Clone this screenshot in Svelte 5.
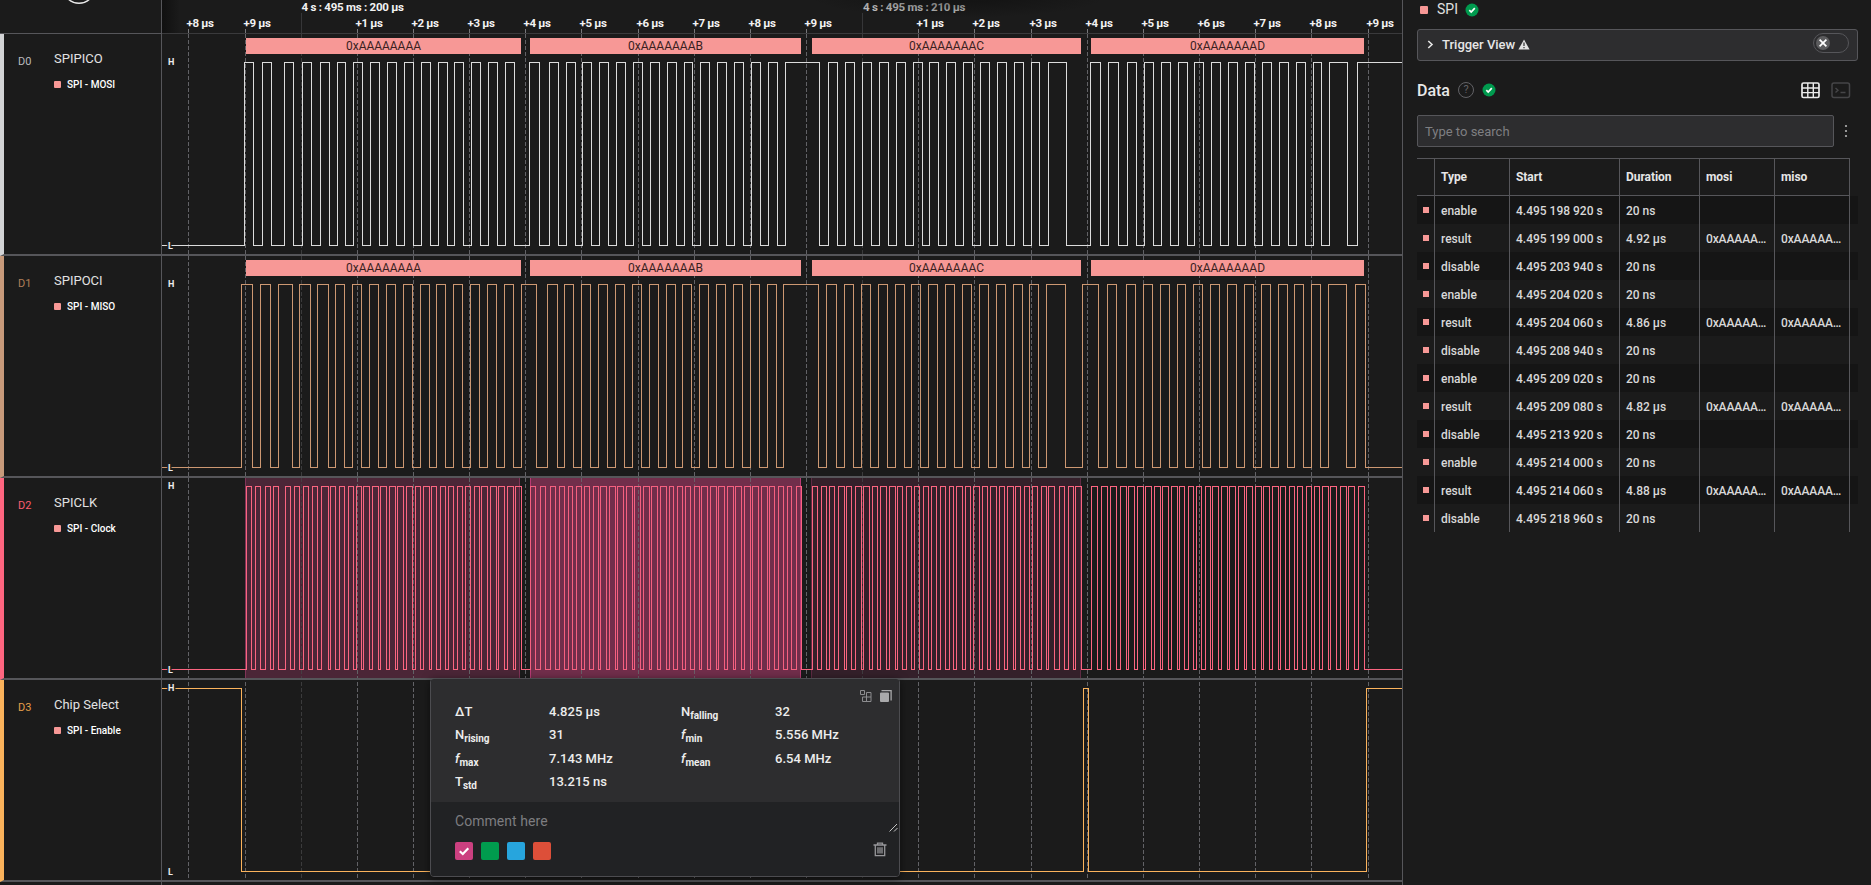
<script>
  const channels = [
    { id: 'D0', name: 'SPIPICO', role: 'SPI - MOSI', color: '#d2d3d5', idColor: '#b9babc', height: 220 },
    { id: 'D1', name: 'SPIPOCI', role: 'SPI - MISO', color: '#c79a7b', idColor: '#b07f58', height: 220 },
    { id: 'D2', name: 'SPICLK', role: 'SPI - Clock', color: '#ff6680', idColor: '#fb5d6e', height: 200 },
    { id: 'D3', name: 'Chip Select', role: 'SPI - Enable', color: '#fbb35c', idColor: '#e59f4a', height: 200 }
  ];

  // Edge positions; the level toggles at every entry.
  const mosi = [244,253,262,271,284,293,302,311,320,329,337,345,353,362,370,379,387,396,404,413,421,430,438,447,454,463,471,480,488,497,505,514,529,539,549,558,566,575,582,591,599,608,616,625,633,642,650,659,667,676,684,692,700,709,717,726,734,743,751,760,768,777,785,819,828,837,845,854,862,871,879,888,896,905,913,922,929,938,946,955,963,972,980,989,997,1006,1014,1023,1031,1039,1048,1066,1090,1100,1108,1118,1127,1136,1144,1153,1161,1170,1178,1187,1194,1203,1211,1220,1228,1237,1245,1254,1262,1271,1279,1288,1296,1305,1313,1321,1329,1347,1357];
  const miso = [241,252,260,270,278,292,299,310,317,328,335,344,352,361,369,378,386,395,403,412,420,429,436,445,453,462,470,479,487,496,504,513,521,536,547,557,564,573,581,590,598,607,615,624,632,641,649,658,666,675,682,691,699,708,716,725,733,742,750,759,767,776,783,818,826,836,844,853,861,870,878,887,895,904,911,920,928,937,945,954,962,971,979,988,996,1005,1013,1022,1029,1038,1046,1065,1082,1098,1107,1116,1126,1135,1143,1152,1160,1169,1177,1185,1193,1202,1210,1219,1227,1236,1244,1253,1261,1270,1278,1287,1294,1303,1311,1320,1328,1346,1355,1365];
  const clk = [246,251,255,260,265,270,273,278,285,290,294,299,303,308,312,317,321,328,330,335,339,344,348,353,356,361,363,369,372,378,380,386,389,395,397,403,406,412,415,420,423,429,431,436,440,445,448,453,457,462,465,470,474,479,481,487,490,496,498,504,507,513,515,521,
    530,535,540,545,550,555,559,564,568,572,576,581,584,589,593,598,600,606,609,615,617,623,626,632,634,640,643,649,651,657,660,666,669,673,677,682,685,690,694,699,701,707,710,716,718,724,727,733,735,741,744,750,752,758,761,767,769,774,778,783,787,791,796,801,
    812,817,821,826,829,834,838,844,846,851,855,861,863,869,872,877,880,886,889,895,897,902,906,911,914,919,923,928,931,936,940,945,949,953,956,962,965,970,973,979,982,987,990,996,999,1004,1007,1013,1015,1020,1024,1029,1032,1037,1041,1046,1048,1054,1059,1064,1068,1073,1075,1081,
    1091,1097,1101,1107,1110,1116,1120,1126,1128,1134,1137,1143,1145,1151,1154,1160,1162,1168,1171,1177,1179,1184,1188,1193,1196,1201,1205,1210,1212,1218,1221,1227,1229,1235,1238,1244,1246,1252,1255,1261,1263,1269,1272,1278,1280,1285,1289,1294,1297,1302,1306,1311,1314,1319,1322,1328,1330,1336,1340,1346,1348,1354,1358,1364];
  const cs = [241,1083,1088,1366];

  function wave(edges, hi, lo, high = false) {
    let d = `M162 ${(high ? hi : lo) + 0.5}`;
    for (const x of edges) {
      d += `H${x + 0.5}`;
      high = !high;
      d += `V${(high ? hi : lo) + 0.5}`;
    }
    return d + 'H1402';
  }

  const traces = [
    { d: wave(mosi, 62, 245), color: '#dcdcdc', hi: 62, lo: 245 },
    { d: wave(miso, 284, 467), color: '#cd9872', hi: 284, lo: 467 },
    { d: wave(clk, 486, 669), color: '#fb6580', hi: 486, lo: 669 },
    { d: wave(cs, 688, 871, true), color: '#fbb35c', hi: 688, lo: 871 }
  ];

  const ticks = [188,245,301,357,413,469,525,581,638,694,750,806,862,918,974,1031,1087,1143,1199,1255,1311,1368]
    .map((x, i) => ({ x, n: (i + 8) % 10 }));

  const frames = [
    { x: 246, w: 275, t: '0xAAAAAAAA' },
    { x: 530, w: 271, t: '0xAAAAAAAB' },
    { x: 812, w: 269, t: '0xAAAAAAAC' },
    { x: 1091, w: 273, t: '0xAAAAAAAD' }
  ];

  const ranges = [
    { x: 245, w: 275, fill: '#4b2637', edge: '#803457' },
    { x: 530, w: 271, fill: '#682d46', edge: '#b73a73' },
    { x: 811, w: 270, fill: '#34202a', edge: '#5e2a43' }
  ];

  const full = '0xAAAAA…';
  const rows = [
    ['enable', '4.495 198 920 s', '20 ns', ''],
    ['result', '4.495 199 000 s', '4.92 µs', full],
    ['disable', '4.495 203 940 s', '20 ns', ''],
    ['enable', '4.495 204 020 s', '20 ns', ''],
    ['result', '4.495 204 060 s', '4.86 µs', full],
    ['disable', '4.495 208 940 s', '20 ns', ''],
    ['enable', '4.495 209 020 s', '20 ns', ''],
    ['result', '4.495 209 080 s', '4.82 µs', full],
    ['disable', '4.495 213 920 s', '20 ns', ''],
    ['enable', '4.495 214 000 s', '20 ns', ''],
    ['result', '4.495 214 060 s', '4.88 µs', full],
    ['disable', '4.495 218 960 s', '20 ns', '']
  ];

  const stats = [
    ['ΔT', '', '4.825 µs'], ['N', 'falling', '32'],
    ['N', 'rising', '31'], ['f', 'min', '5.556 MHz'],
    ['f', 'max', '7.143 MHz'], ['f', 'mean', '6.54 MHz'],
    ['T', 'std', '13.215 ns']
  ];
  const swatches = ['#cc4080', '#009c4e', '#27a5dd', '#dd4f39'];
</script>

{#snippet ok()}
  <svg class="ok" width="14" height="14" viewBox="0 0 14 14">
    <circle cx="7" cy="7" r="6.5" fill="#009a4e" />
    <path d="M4.3 7.2 6.2 9 9.8 5.2" fill="none" stroke="#fff" stroke-width="1.7" />
  </svg>
{/snippet}

<div class="app">
  <aside class="channels">
    <div class="corner">
      <svg width="161" height="33"><circle cx="79" cy="-12.5" r="15.8" fill="none" stroke="#e8e8e8" stroke-width="1.4" /></svg>
    </div>
    {#each channels as c}
      <section class="channel" style="height:{c.height}px;border-left-color:{c.color}">
        <span class="id" style="color:{c.idColor}">{c.id}</span>
        <div class="info">
          <div class="name">{c.name}</div>
          <div class="role"><i></i>{c.role}</div>
        </div>
      </section>
    {/each}
  </aside>

  <main>
    <svg class="plot" width="1240" height="885" viewBox="162 0 1240 885">
      <defs>
        <linearGradient id="edge"><stop offset="0" stop-color="#101010" /><stop offset="1" stop-color="#101010" stop-opacity="0" /></linearGradient>
        <radialGradient id="shade"><stop offset="0.3" stop-color="#0b0b0b" stop-opacity="0.85" /><stop offset="1" stop-color="#0b0b0b" stop-opacity="0" /></radialGradient>
      </defs>
      <rect x="162" y="0" width="18" height="33" fill="url(#edge)" />
      <rect x="162" y="33" width="1240" height="1" fill="#3a3a3c" />

      {#each ranges as r}
        <rect x={r.x} y="478" width={r.w} height="200" fill={r.fill} />
      {/each}

      {#each ticks as t}
        {#if t.n === 0}
          <path d="M{t.x + 0.5} 13V33" stroke="#363638" />
          <path d="M{t.x + 0.5} 34V880" stroke="#464648" stroke-dasharray="4 2" opacity=".75" />
        {:else}
          <path d="M{t.x + 0.5} 29V33" stroke="#77777a" />
          <path d="M{t.x + 0.5} 34V880" stroke="#626266" stroke-dasharray="4 2" />
          <text class="tick" x={t.x - 1.5} y="27" textLength="27.5">+{t.n} µs</text>
        {/if}
      {/each}
      <text class="tick" x="301.5" y="10.5" textLength="102.5">4 s : 495 ms : 200 µs</text>
      <text class="tick dim" x="863" y="10.5" textLength="102.5">4 s : 495 ms : 210 µs</text>
      <ellipse cx="958" cy="-4" rx="150" ry="22" fill="url(#shade)" opacity=".5" />

      {#each [38, 260] as y}
        {#each frames as f}
          <rect x={f.x} {y} width={f.w} height="16" fill="#f79896" />
          <text class="frame" x={f.x + f.w / 2} y={y + 12} text-anchor="middle" textLength="75" lengthAdjust="spacingAndGlyphs">{f.t}</text>
        {/each}
      {/each}

      {#each ranges as r}
        <path d="M{r.x + 0.5} 478V678M{r.x + r.w - 0.5} 478V678" stroke={r.edge} />
      {/each}
      {#each traces as t}
        <path d={t.d} fill="none" stroke={t.color} shape-rendering="crispEdges" />
      {/each}
      <!-- Selection tint over the clock trace -->
      <rect x="530" y="478" width="271" height="200" fill="#c83c7d" opacity=".1" />

      {#each traces as t}
        <text class="level" x="168" y={t.hi + 3}>H</text>
        <text class="level" x="168" y={t.lo + 4}>L</text>
      {/each}
      {#each [254, 476, 678, 880] as y}
        <rect x="162" {y} width="1240" height="2" fill="#56565a" />
      {/each}
    </svg>

    <div class="popup">
      <div class="measure">
        <svg class="tools" width="34" height="14" viewBox="0 0 34 14" fill="none">
          <path d="M1.5 1.5h4v4h-4zM7.5 8V3.5h4.5v9H3.5V8h8.5M7.5 8v4.5" stroke="#8c8c8f" />
          <rect x="21" y="3.5" width="9" height="9.5" rx="1" fill="#a9a9ab" />
          <path d="M22.5 1.6h9.6v10" stroke="#a9a9ab" stroke-width="1.3" />
        </svg>
        <dl>
          {#each stats as [a, sub, v]}
            <dt><span class:fn={a === 'f'}>{a}</span>{#if sub}<small>{sub}</small>{/if}</dt>
            <dd>{v}</dd>
          {/each}
        </dl>
      </div>
      <div class="note">
        <div class="comment">Comment here</div>
        <svg class="grip" width="9" height="9" viewBox="0 0 9 9"><path d="M.5 8.5 8 1M5 8.5 8.5 5" stroke="#c4c4c4" fill="none" /></svg>
        <div class="actions">
          {#each swatches as s, i}
            <span class="swatch" style="background:{s}">
              {#if i === 0}<svg width="18" height="18"><path d="M4.8 9.2 7.8 12 13.3 6.2" fill="none" stroke="#fff" stroke-width="2.2" /></svg>{/if}
            </span>
          {/each}
          <svg class="trash" width="14" height="15" viewBox="0 0 14 15" fill="none" stroke="#97979a" stroke-width="1.3">
            <path d="M.5 3h13M4.5 3V1.2h5V3M2.3 3v10.6h9.4V3M5 5.2v6.3M7 5.2v6.3M9 5.2v6.3" />
          </svg>
        </div>
      </div>
    </div>
  </main>

  <aside class="panel">
    <div class="protocol"><i></i><span>SPI</span>{@render ok()}</div>
    <div class="trigger">
      <svg class="chev" width="7" height="9" viewBox="0 0 7 9"><path d="M1.3 1 5 4.5 1.3 8" fill="none" stroke="#e4e4e4" stroke-width="1.6" /></svg>
      <span>Trigger View</span>
      <svg class="warn" width="12" height="11" viewBox="0 0 12 11"><path d="M6 .4 11.6 10.4H.4Z" fill="#e4e4e4" /><path d="M6 3.6V7M6 8v1.3" stroke="#2d2d2f" stroke-width="1.2" /></svg>
      <div class="toggle"><svg width="14" height="14" viewBox="0 0 14 14"><circle cx="7" cy="7" r="7" fill="#5c5c5e" /><path d="M3.6 3.6l6.8 6.8M10.4 3.6l-6.8 6.8" stroke="#fff" stroke-width="1.7" /></svg></div>
    </div>
    <div class="data-head">
      <h2>Data</h2>
      <span class="help">?</span>
      {@render ok()}
      <svg class="views" width="50" height="17" viewBox="0 0 50 17" fill="none">
        <rect x="1" y="1" width="17" height="14.5" rx="1.5" stroke="#ececec" stroke-width="1.7" />
        <path d="M6.8 1v14.5M12.3 1v14.5M1 6h17M1 10.6h17" stroke="#ececec" stroke-width="1.4" />
        <rect x="31" y="1" width="17.5" height="14.5" rx="2" stroke="#464648" stroke-width="1.5" />
        <path d="M34.5 6 37 8.3 34.5 10.6M39.5 10.5h5" stroke="#464648" stroke-width="1.4" />
      </svg>
    </div>
    <div class="search-row">
      <div class="search">Type to search</div>
      <svg width="4" height="14" viewBox="0 0 4 14" fill="#b4b4b4"><circle cx="2" cy="2" r="1.1" /><circle cx="2" cy="7" r="1.1" /><circle cx="2" cy="12" r="1.1" /></svg>
    </div>
    <div class="table">
      <div class="tr head"><b></b><b>Type</b><b>Start</b><b>Duration</b><b>mosi</b><b>miso</b></div>
      {#each rows as r}
        <div class="tr"><span class="mark"><i></i></span><span>{r[0]}</span><span>{r[1]}</span><span>{r[2]}</span><span class="hex">{r[3]}</span><span class="hex">{r[3]}</span></div>
      {/each}
    </div>
  </aside>
</div>

<style>
  :global(body) { background: #1b1b1b; overflow: hidden; }
  .app { display: grid; grid-template-columns: 161px 1242px 468px; width: 1871px; height: 885px; overflow: hidden; background: #1b1b1b; color: #e0e0e0; font-family: Roboto, sans-serif; }
  svg { display: block; flex: none; }
  .corner { height: 33px; border-bottom: 1px solid #56565a; }
  .channel { display: flex; box-sizing: content-box; border-left: 4px solid; border-bottom: 2px solid #56565a; }
  .id { box-sizing: content-box; flex: none; width: 36px; padding: 21px 0 0 14px; font-size: 11px; line-height: 13px; }
  .name { padding-top: 16px; font-size: 13px; line-height: 18px; color: #e2e2e2; white-space: nowrap; }
  .role { display: flex; align-items: center; gap: 6px; margin-top: 10px; font-size: 10px; line-height: 14px; font-weight: 500; color: #fff; white-space: nowrap; }
  .role i { width: 7px; height: 7px; border-radius: 1px; background: #f79896; margin-top: -1px; }

  main { position: relative; border-left: 1px solid #56565a; border-right: 1px solid #56565a; }
  .tick { font: 700 11.5px Roboto, sans-serif; fill: #f2f2f2; }
  .dim { fill: #c8c8c8; }
  .frame { font: 400 13px Roboto, sans-serif; fill: #3a1f1f; }
  .level { font: 700 9px Roboto, sans-serif; fill: #ececec; stroke: #1b1b1b; stroke-width: 3px; paint-order: stroke; }

  .popup { position: absolute; left: 268px; top: 678px; width: 468px; height: 197px; border: 1px solid #4c4c50; border-radius: 4px; overflow: hidden; box-shadow: 0 2px 8px #0008; display: flex; flex-direction: column; }
  .measure { height: 123px; background: #2d2d2f; position: relative; }
  .tools { position: absolute; right: 6px; top: 10px; }
  dl { margin: 0; padding: 24px 0 0 24px; display: grid; grid-template-columns: 94px 132px 94px 132px; grid-auto-rows: 23.3px; font-size: 13px; font-weight: 500; color: #ededed; letter-spacing: .03px; }
  dt, dd { margin: 0; line-height: 17px; white-space: nowrap; }
  small { font-size: 10px; font-weight: 700; position: relative; top: 3px; line-height: 1; letter-spacing: -.05px; }
  .fn { font-style: italic; }
  .note { flex: 1; background: #212224; position: relative; padding: 10px 12px 0 24px; }
  .comment { font-size: 14px; line-height: 18px; color: #7d7d80; letter-spacing: .05px; }
  .grip { position: absolute; right: 1px; top: 21px; }
  .actions { display: flex; gap: 8px; margin-top: 12px; }
  .swatch { width: 18px; height: 18px; border-radius: 2px; }
  .trash { margin-left: auto; }

  .panel { padding-left: 14px; }
  .protocol { display: flex; align-items: center; height: 20px; padding-left: 3px; font-size: 14px; }
  .protocol i { width: 8px; height: 8px; border-radius: 1px; background: #f79896; }
  .protocol span { margin: -2px 6px 0 9px; width: 22px; }
  .trigger { box-sizing: border-box; margin-top: 9px; width: 441px; height: 32px; display: flex; align-items: center; background: #2d2d2f; border: 1px solid #56565a; border-radius: 3px; font-size: 13px; font-weight: 500; padding: 0 8px 1px 9px; color: #e6e6e6; }
  .trigger span { margin: 0 3px 0 8px; width: 73px; white-space: nowrap; }
  .toggle { margin-left: auto; margin-top: -3px; box-sizing: border-box; width: 36px; height: 20px; border: 1px solid #56565a; border-radius: 10px; padding: 2px; }
  .data-head { display: flex; align-items: center; height: 24px; margin-top: 17px; width: 433px; }
  h2 { margin: 0; font-size: 16px; font-weight: 500; color: #e8e8e8; width: 33px; letter-spacing: -.05px; }
  .help { box-sizing: border-box; width: 16px; height: 16px; border: 1px solid #626266; border-radius: 50%; margin: 0 8px 0 8px; font-size: 11px; line-height: 14px; text-align: center; color: #626266; }
  .views { margin-left: auto; margin-right: -1px; }
  .search-row { display: flex; align-items: center; gap: 10px; margin-top: 13px; }
  .search { box-sizing: border-box; width: 417px; height: 32px; background: #2d2d2f; border: 1px solid #56565a; border-radius: 2px; padding-left: 7px; font-size: 13px; line-height: 31px; color: #7f7f82; }
  .table { margin-top: 11px; width: 441px; font-size: 12px; }
  .tr { display: grid; grid-template-columns: 18px 75px 110px 80px 75px 75px; height: 28px; line-height: 31px; color: #d8d8d8; font-weight: 500; }
  .tr > * { border-right: 1px solid #56565a; padding-left: 6px; white-space: nowrap; overflow: hidden; }
  .tr:nth-child(even) { background: #151515; }
  .head { width: 433px; height: 36px; border-top: 1px solid #56565a; border-bottom: 1px solid #56565a; line-height: 36px; color: #e6e6e6; }
  .head b { font-weight: 700; letter-spacing: -.05px; }
  .hex { letter-spacing: -.12px; }
  .mark i { display: block; width: 6px; height: 6px; background: #f79896; margin-top: 11px; }
</style>
